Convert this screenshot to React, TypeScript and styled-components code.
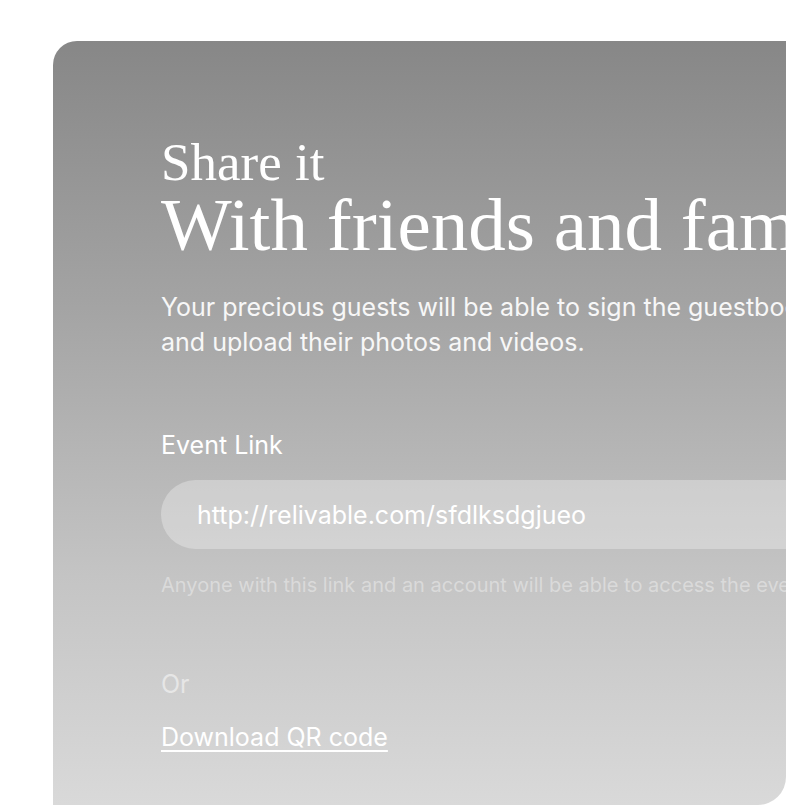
import React from 'react';
import styled, { createGlobalStyle } from 'styled-components';

const GlobalStyle = createGlobalStyle`
html, body {
  margin: 0;
  padding: 0;
  background: #ffffff;
}
body {
  font-family: Inter, "Noto Sans", sans-serif;
  overflow: hidden;
}
`;

const Page = styled.div`
    width: 786px;
    height: 806px;
    padding: 41px 0 0 53px;
    box-sizing: border-box;
`;

const Card = styled.section`
    width: 733px;
    height: 764px;
    box-sizing: border-box;
    border-radius: 24px 0 28px 0;
    background: linear-gradient(180deg, #878787 0%, #a4a4a4 35%, #c4c4c4 70%, #d9d9d9 100%);
    overflow: hidden;
    padding: 93px 0 0 108px;
    display: flex;
    flex-direction: column;
    white-space: nowrap;
    color: #ffffff;
`;

const Kicker = styled.h2`
    margin: 0;
    font-family: "Liberation Serif", "DejaVu Serif", serif;
    font-weight: 400;
    font-size: 53px;
    line-height: 56px;
`;

const Title = styled.h1`
    margin: 0;
    font-family: "Liberation Serif", "DejaVu Serif", serif;
    font-weight: 400;
    font-size: 75px;
    line-height: 70px;
`;

const Lead = styled.p`
    margin: 30px 0 0;
    font-size: 25px;
    line-height: 35px;
    color: #f7f7f7;
`;

const Label = styled.div`
    margin-top: 71px;
    font-size: 25px;
    line-height: 28px;
    color: #ffffff;
`;

const LinkField = styled.div`
    margin-top: 21px;
    width: 720px;
    height: 69px;
    border-radius: 35px;
    background: rgba(255, 255, 255, 0.3);
    display: flex;
    align-items: center;
    padding-left: 36px;
    box-sizing: border-box;
    font-size: 25px;
    color: #ffffff;
`;

const Hint = styled.div`
    margin-top: 22px;
    font-size: 20px;
    line-height: 28px;
    color: rgba(255, 255, 255, 0.38);
`;

const Or = styled.div`
    margin-top: 71px;
    font-size: 25px;
    line-height: 28px;
    color: rgba(255, 255, 255, 0.5);
`;

const Download = styled.a`
    margin-top: 24px;
    align-self: flex-start;
    font-size: 25px;
    line-height: 30px;
    color: #ffffff;
    text-decoration: underline;
    text-decoration-thickness: 2px;
    text-underline-offset: 4px;
`;

export default function App() {
    return (
        <Page>
            <GlobalStyle />
            <Card>
                <Kicker>Share it</Kicker>
                <Title>With friends and family</Title>
                <Lead>
                    Your precious guests will be able to sign the guestbook
                    <br />
                    and upload their photos and videos.
                </Lead>
                <Label>Event Link</Label>
                <LinkField>http://relivable.com/sfdlksdgjueo</LinkField>
                <Hint>
                    Anyone with this link and an account will be able to access the event.
                </Hint>
                <Or>Or</Or>
                <Download href="#">Download QR code</Download>
            </Card>
        </Page>
    );
}
